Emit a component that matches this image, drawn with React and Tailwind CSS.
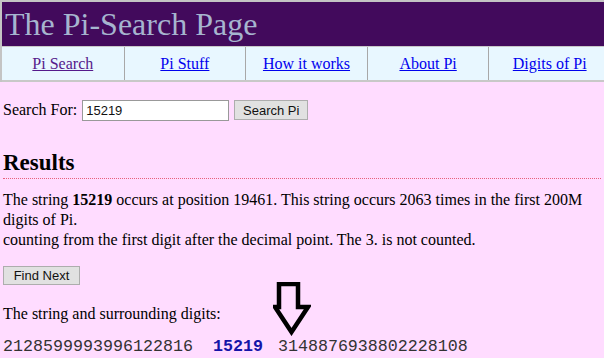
import React from "react";

const NAV = [
  { label: "Pi Search", visited: true },
  { label: "Pi Stuff" },
  { label: "How it works" },
  { label: "About Pi" },
  { label: "Digits of Pi" },
];

const DownArrow = () => (
  <svg width="38" height="54" viewBox="0 0 38 54" fill="none">
    <polygon
      points="6,2 25,2 25,25 35,25 18.5,50 2,25 6,25"
      stroke="#000"
      strokeWidth="4.5"
      strokeLinejoin="miter"
      fill="none"
    />
  </svg>
);

export default function App() {
  return (
    <div className="relative min-h-screen w-[604px] overflow-hidden bg-[#ffdcff] font-['Liberation_Serif',serif] text-[16px] text-black">
      <div className="w-[610px] border-l-2 border-t-2 border-[#c4c4c4]">
        <div className="h-[44px] bg-[#420a5c] pl-[3px] text-[32px] leading-[44px] text-[#a6b5cf]">
          The Pi-Search Page
        </div>
        <div className="grid h-[36px] grid-cols-5 border-t border-b-2 border-[#c8c8c8] bg-[#e8f7ff]">
          {NAV.map((n, i) => (
            <div
              key={n.label}
              className={`flex items-center justify-center ${
                i > 0 ? "border-l border-[#a8a8a8]" : ""
              }`}
            >
              <a
                href="#"
                className={`underline ${
                  n.visited ? "text-[#551a8b]" : "text-[#0000ee]"
                }`}
              >
                {n.label}
              </a>
            </div>
          ))}
        </div>
      </div>

      <div className="px-[3px]">
        <div className="mt-[16px] flex items-center">
          <span>Search For:</span>
          <input
            defaultValue="15219"
            className="ml-[5px] h-[21px] w-[147px] border border-[#999] bg-white px-[3px] font-['Liberation_Sans',sans-serif] text-[13px] text-[#111] outline-none"
          />
          <button className="ml-[5px] h-[20px] w-[74px] border border-[#adadad] bg-[#e1e1e1] font-['Liberation_Sans',sans-serif] text-[13px] text-[#111]">
            Search Pi
          </button>
        </div>

        <h2 className="mt-[29px] border-b border-dotted border-[#e8607c] pb-[3px] text-[23px] font-bold leading-[24px]">
          Results
        </h2>

        <p className="mt-[11px] leading-[20px]">
          The string <b>15219</b> occurs at position 19461. This string occurs
          2063 times in the first 200M digits of Pi.
          <br />
          counting from the first digit after the decimal point. The 3. is not
          counted.
        </p>

        <button className="mt-[16px] h-[19px] w-[77px] border border-[#adadad] bg-[#e1e1e1] font-['Liberation_Sans',sans-serif] text-[13px] leading-[17px] text-[#111]">
          Find Next
        </button>

        <div className="mt-[17px] leading-[20px]">
          The string and surrounding digits:
        </div>

        <div className="mt-[13px] flex font-['Liberation_Mono',monospace] text-[16.67px] leading-[20px] text-[#333]">
          <span>2128599993996122816</span>
          <span className="ml-[20px] mr-[15px] font-bold text-[#1414a8]">
            15219
          </span>
          <span>3148876938802228108</span>
        </div>
      </div>

      <div className="absolute left-[273px] top-[282px]">
        <DownArrow />
      </div>
    </div>
  );
}
